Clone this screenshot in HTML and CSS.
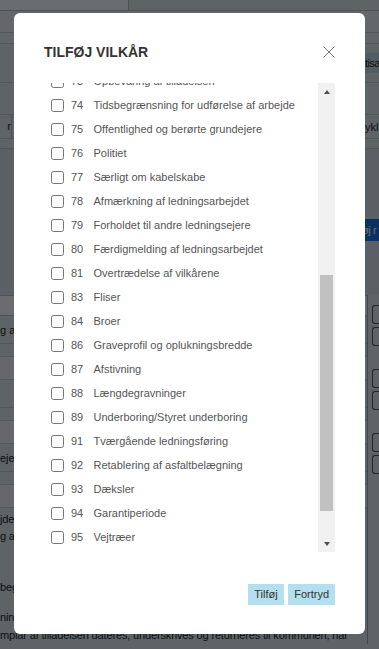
FILE: index.html
```html
<!DOCTYPE html>
<html>
  <head>
    <meta charset="utf-8" />
    <link rel="stylesheet" href="styles.css">
  </head>

  <body>
    <div class="page">
      <div class="page-head"><div class="page-tab"></div></div>
      <div class="page-nav"></div>
      <div class="page-subnav"></div>
      <div class="page-tools">
        <span class="tool-btn">tisa</span>
      </div>
      <div class="page-row"></div>
      <div class="page-thead">
        <span class="th-left">r</span>
        <span class="th-right">ykl</span>
      </div>
      <div class="page-gap"></div>
      <div class="page-panel">
        <span class="panel-btn">øj r</span>
      </div>

      <div class="page-lower">
        <div class="lower-main">
          <div class="page-line"></div>
          <div class="cell-row"><span class="cell-text">g af</span></div>
          <div class="cell-gap"></div>
          <div class="cell-shade"></div>
          <div class="cell-row"></div>
          <div class="cell-gap"></div>
          <div class="cell-shade"></div>
          <div class="cell-row"><span class="cell-text">eje,</span></div>
          <div class="cell-gap"></div>
          <div class="cell-shade"></div>
          <p class="page-text text-first">jde<br>g a</p>
          <p class="page-text text-mid">beg</p>
          <p class="page-text text-last">nin<br>mplar af tilladelsen dateres, underskrives og returneres til kommunen, når</p>
        </div>
        <div class="lower-side">
          <span class="mini-btns"><i></i><i></i></span>
          <span class="mini-btns"><i></i><i></i></span>
          <span class="mini-btns"><i></i><i></i></span>
        </div>
      </div>
    </div>

    <div class="backdrop"></div>

    <div class="modal">
      <div class="modal-header">
        <h2 class="modal-title">TILFØJ VILKÅR</h2>
        <button class="modal-close" aria-label="Luk">
          <svg width="12" height="12" viewBox="0 0 12 12">
            <path d="M0.5 0.5 L11.5 11.5 M11.5 0.5 L0.5 11.5" stroke="#7a7a7a" stroke-width="1" fill="none" />
          </svg>
        </button>
      </div>

      <div class="terms">
        <div class="terms-view">
          <ul class="terms-list">
            <li><label><input type="checkbox"><span class="num">73</span>Opbevaring af tilladelsen</label></li>
            <li><label><input type="checkbox"><span class="num">74</span>Tidsbegrænsning for udførelse af arbejde</label></li>
            <li><label><input type="checkbox"><span class="num">75</span>Offentlighed og berørte grundejere</label></li>
            <li><label><input type="checkbox"><span class="num">76</span>Politiet</label></li>
            <li><label><input type="checkbox"><span class="num">77</span>Særligt om kabelskabe</label></li>
            <li><label><input type="checkbox"><span class="num">78</span>Afmærkning af ledningsarbejdet</label></li>
            <li><label><input type="checkbox"><span class="num">79</span>Forholdet til andre ledningsejere</label></li>
            <li><label><input type="checkbox"><span class="num">80</span>Færdigmelding af ledningsarbejdet</label></li>
            <li><label><input type="checkbox"><span class="num">81</span>Overtrædelse af vilkårene</label></li>
            <li><label><input type="checkbox"><span class="num">83</span>Fliser</label></li>
            <li><label><input type="checkbox"><span class="num">84</span>Broer</label></li>
            <li><label><input type="checkbox"><span class="num">86</span>Graveprofil og oplukningsbredde</label></li>
            <li><label><input type="checkbox"><span class="num">87</span>Afstivning</label></li>
            <li><label><input type="checkbox"><span class="num">88</span>Længdegravninger</label></li>
            <li><label><input type="checkbox"><span class="num">89</span>Underboring/Styret underboring</label></li>
            <li><label><input type="checkbox"><span class="num">91</span>Tværgående ledningsføring</label></li>
            <li><label><input type="checkbox"><span class="num">92</span>Retablering af asfaltbelægning</label></li>
            <li><label><input type="checkbox"><span class="num">93</span>Dæksler</label></li>
            <li><label><input type="checkbox"><span class="num">94</span>Garantiperiode</label></li>
            <li><label><input type="checkbox"><span class="num">95</span>Vejtræer</label></li>
          </ul>
        </div>
        <div class="scrollbar">
          <div class="sb-btn"><span class="arrow-up"></span></div>
          <div class="sb-track"><div class="sb-thumb"></div></div>
          <div class="sb-btn"><span class="arrow-down"></span></div>
        </div>
      </div>

      <div class="modal-footer">
        <button class="btn">Tilføj</button>
        <button class="btn">Fortryd</button>
      </div>
    </div>
  </body>
</html>
```

FILE: styles.css
```css
html,
body {
  margin: 0;
  padding: 0;
}

body {
  font-family: "Liberation Sans", Arial, sans-serif;
  background: #e3e8ea;
  color: #333;
  width: 379px;
  height: 649px;
  overflow: hidden;
}

/* page behind the dialog */
.page {
  width: 379px;
  font-size: 11px;
  color: #222;
}
.page-head {
  height: 10px;
  border-bottom: 1px solid #b9bfc2;
}
.page-tab {
  width: 128px;
  height: 10px;
  background: #fff;
  border-right: 1px solid #b9bfc2;
}
.page-nav {
  height: 21px;
  background: #edf1f3;
  border-bottom: 1px solid #c4cacd;
}
.page-subnav {
  height: 10px;
  background: #e8ecee;
  border-bottom: 1px solid #c4cacd;
}
.page-tools {
  height: 38px;
  display: flex;
  justify-content: flex-end;
  align-items: center;
  border-bottom: 1px solid #c4cacd;
}
.tool-btn {
  width: 14px;
  line-height: 20px;
  letter-spacing: -0.6px;
  white-space: nowrap;
  background: #c4d9e3;
}
.page-row {
  height: 31px;
  border-bottom: 1px solid #c4cacd;
}
.page-thead {
  height: 23px;
  display: flex;
  justify-content: space-between;
  align-items: center;
  border-bottom: 1px solid #c4cacd;
}
.th-left {
  width: 11px;
  height: 23px;
  line-height: 23px;
  text-align: right;
  border-right: 1px solid #b9bfc2;
}
.th-right {
  width: 14px;
  white-space: nowrap;
}
.page-gap {
  height: 9px;
  border-bottom: 1px solid #c4cacd;
}
.page-panel {
  height: 146px;
  background: #d8dfe1;
  display: flex;
  justify-content: flex-end;
  align-items: flex-start;
}
.panel-btn {
  margin-top: 70px;
  width: 17px;
  white-space: nowrap;
  line-height: 22px;
  letter-spacing: -0.4px;
  background: #1a6fe0;
  color: #fff;
}

.page-lower {
  display: grid;
  grid-template-columns: 1fr 12px;
}
.lower-side {
  border-left: 1px solid #9aa1a4;
  padding: 10px 0 0 4px;
  display: flex;
  flex-direction: column;
  gap: 23px;
}
.mini-btns {
  display: flex;
  flex-direction: column;
  gap: 3px;
}
.mini-btns i {
  display: block;
  height: 17px;
  border: 1px solid #555;
  border-right: 0;
  border-radius: 3px 0 0 3px;
}
.page-line {
  height: 19px;
  background: #fff;
  border-top: 1px solid #b9bfc2;
  border-bottom: 1px solid #b9bfc2;
}
.cell-row {
  height: 27px;
  display: flex;
  align-items: center;
  border-bottom: 1px solid #c4cacd;
}
.cell-gap {
  height: 12px;
  border-bottom: 1px solid #c4cacd;
}
.cell-shade {
  height: 22px;
  background: #f3f4f5;
  border-bottom: 1px solid #c4cacd;
}
.cell-text {
  white-space: nowrap;
}
.page-text {
  margin: 0;
  line-height: 17px;
  white-space: nowrap;
  letter-spacing: -0.15px;
}
.text-first {
  margin-top: 3px;
}
.text-mid {
  margin-top: 34px;
}
.text-last {
  margin-top: 12px;
  line-height: 18px;
}

/* dialog */
.backdrop {
  position: fixed;
  inset: 0;
  background: rgba(0, 5, 8, 0.585);
}
.modal {
  position: fixed;
  left: 14px;
  top: 13px;
  width: 351px;
  height: 621px;
  box-sizing: border-box;
  padding: 29px 30px 0;
  background: #fff;
  border-radius: 6px;
}
.modal-header {
  display: flex;
  justify-content: space-between;
  align-items: center;
  height: 20px;
}
.modal-title {
  margin: 0;
  font-size: 14px;
  line-height: 20px;
  font-weight: bold;
  color: #333;
}
.modal-close {
  border: 0;
  padding: 0;
  background: none;
  width: 12px;
  height: 12px;
  display: block;
  cursor: pointer;
}
.modal-close svg {
  display: block;
}

.terms {
  margin-top: 21px;
  height: 469px;
  display: flex;
}
.terms-view {
  flex: 1;
  overflow: hidden;
}
.terms-list {
  list-style: none;
  margin: -14px 0 0;
  padding: 0 0 0 7px;
}
.terms-list label {
  display: flex;
  align-items: center;
  height: 24px;
  font-size: 11px;
  color: #555;
  white-space: nowrap;
}
.terms-list input {
  margin: 0 7px 0 0;
  width: 13px;
  height: 13px;
}
.num {
  width: 22.5px;
  flex: none;
}

.scrollbar {
  width: 17px;
  background: #f1f1f1;
  display: flex;
  flex-direction: column;
}
.sb-btn {
  height: 17px;
  display: flex;
  align-items: center;
  justify-content: center;
}
.arrow-up,
.arrow-down {
  width: 0;
  height: 0;
  border-left: 3.5px solid transparent;
  border-right: 3.5px solid transparent;
}
.arrow-up {
  border-bottom: 4px solid #505050;
}
.arrow-down {
  border-top: 4px solid #505050;
}
.sb-track {
  flex: 1;
  padding-top: 175px;
}
.sb-thumb {
  margin: 0 2px;
  height: 236px;
  background: #c1c1c1;
}

.modal-footer {
  margin-top: 32px;
  text-align: right;
}
.btn {
  font-family: "Liberation Sans", Arial, sans-serif;
  font-size: 11px;
  line-height: 13px;
  padding: 4px 6px;
  border: 0;
  background: #b3dfee;
  color: #333;
  cursor: pointer;
}
```
